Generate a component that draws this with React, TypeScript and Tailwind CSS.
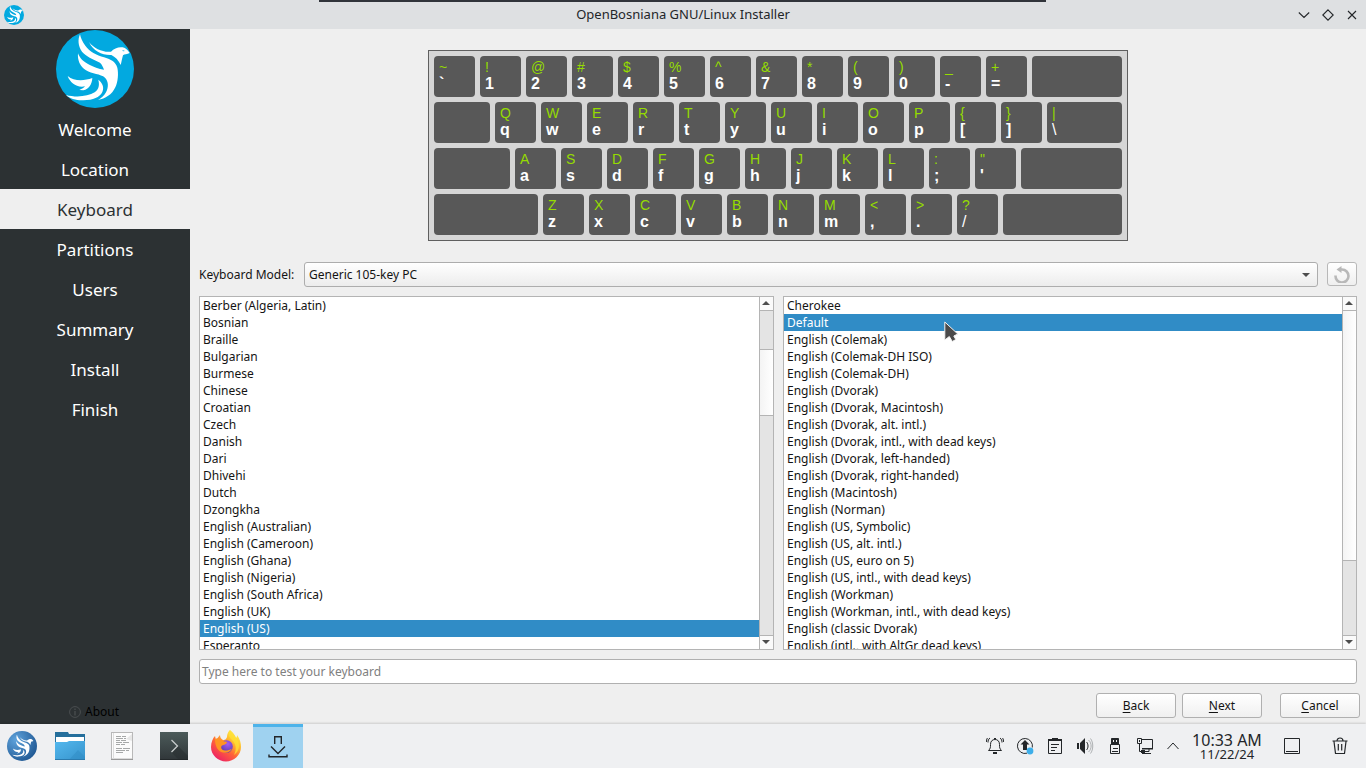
import React from "react";

const steps = ["Welcome", "Location", "Keyboard", "Partitions", "Users", "Summary", "Install", "Finish"];

const layouts = [
  "Berber (Algeria, Latin)", "Bosnian", "Braille", "Bulgarian", "Burmese", "Chinese", "Croatian", "Czech",
  "Danish", "Dari", "Dhivehi", "Dutch", "Dzongkha", "English (Australian)", "English (Cameroon)",
  "English (Ghana)", "English (Nigeria)", "English (South Africa)", "English (UK)", "English (US)", "Esperanto",
];

const variants = [
  "Cherokee", "Default", "English (Colemak)", "English (Colemak-DH ISO)", "English (Colemak-DH)",
  "English (Dvorak)", "English (Dvorak, Macintosh)", "English (Dvorak, alt. intl.)",
  "English (Dvorak, intl., with dead keys)", "English (Dvorak, left-handed)", "English (Dvorak, right-handed)",
  "English (Macintosh)", "English (Norman)", "English (US, Symbolic)", "English (US, alt. intl.)",
  "English (US, euro on 5)", "English (US, intl., with dead keys)", "English (Workman)",
  "English (Workman, intl., with dead keys)", "English (classic Dvorak)", "English (intl., with AltGr dead keys)",
];

const keyRows: { lead: string | null; keys: [string, string][]; last: [string, string] | null }[] = [
  {
    lead: null,
    keys: [["~", "`"], ["!", "1"], ["@", "2"], ["#", "3"], ["$", "4"], ["%", "5"], ["^", "6"], ["&", "7"], ["*", "8"], ["(", "9"], [")", "0"], ["_", "-"], ["+", "="]],
    last: null,
  },
  {
    lead: "w-[56px]",
    keys: [["Q", "q"], ["W", "w"], ["E", "e"], ["R", "r"], ["T", "t"], ["Y", "y"], ["U", "u"], ["I", "i"], ["O", "o"], ["P", "p"], ["{", "["], ["}", "]"]],
    last: ["|", "\\"],
  },
  {
    lead: "w-[76px]",
    keys: [["A", "a"], ["S", "s"], ["D", "d"], ["F", "f"], ["G", "g"], ["H", "h"], ["J", "j"], ["K", "k"], ["L", "l"], [":", ";"], ["\"", "'"]],
    last: null,
  },
  {
    lead: "w-[104px]",
    keys: [["Z", "z"], ["X", "x"], ["C", "c"], ["V", "v"], ["B", "b"], ["N", "n"], ["M", "m"], ["<", ","], [">", "."], ["?", "/"]],
    last: null,
  },
];

function Dove() {
  return (
    <g fill="#fff">
      <path d="M240 103C233 118 234 138 246 155C256 168 280 178 300 188C306 194 310 202 312 209C296 207 280 200 268 194C250 186 239 174 234 160C232 180 240 200 258 211C276 222 302 222 315 233C326 244 326 262 318 277C312 288 304 295 294 300C316 296 336 284 346 262C354 245 356 220 352 203C347 185 330 177 312 172C290 166 268 154 256 137C247 125 242 114 240 103Z" />
      <path d="M267 126C282 146 310 158 333 155C342 145 356 140 368 142C378 144 382 150 389 159C382 163 373 162 369 166C366 176 365 185 362 195C355 181 348 172 334 165C306 166 280 154 267 126Z" />
      <path d="M203 228C222 244 252 243 277 234C276 252 267 268 250 271L238 270C246 267 252 263 255 259C230 264 210 248 203 228Z" />
      <path d="M198 285C228 293 264 290 284 277C299 266 298 252 295 239C308 249 313 262 307 276C299 292 280 300 250 301C230 302 210 296 198 285Z" />
    </g>
  );
}

function Logo({ size }: { size: number }) {
  return (
    <svg width={size} height={size} viewBox="168 90 234 234">
      <circle cx="285" cy="207" r="117" fill="#02a9e0" />
      <Dove />
      <path d="M367 150l8 3-6 1z" fill="#02a9e0" />
    </svg>
  );
}

function Key({ label, className }: { label?: [string, string] | null; className: string }) {
  const thin = label && (label[1] === "\\" || label[1] === "/");
  return (
    <div className={"h-[41px] rounded-[4px] bg-[#585858] pl-[5px] pt-[3px] " + className}>
      {label && (
        <>
          <div className="h-[16px] text-[14px] leading-[17px] text-[#95dc00]">{label[0]}</div>
          <div className={"h-[17px] text-[16px] leading-[17px] text-white " + (thin ? "font-normal" : "font-bold")}>{label[1]}</div>
        </>
      )}
    </div>
  );
}

function Arrow({ up }: { up?: boolean }) {
  return (
    <svg width="8" height="4" viewBox="0 0 8 4">
      <path d={up ? "M0 4L4 0L8 4Z" : "M0 0L4 4L8 0Z"} fill="#4d4d4d" />
    </svg>
  );
}

function ListBox({ items, selected, thumb, before, className }: { items: string[]; selected: string; thumb: string; before: string; className: string }) {
  return (
    <div className={"flex h-[354px] border border-[#b4b4b4] bg-white " + className}>
      <div className="min-w-0 flex-1 overflow-hidden">
        {items.map((item) => (
          <div key={item} className={"h-[17px] whitespace-nowrap pl-[3px] leading-[17px] " + (item === selected ? "bg-[#308cc6] text-white" : "")}>
            {item}
          </div>
        ))}
      </div>
      <div className="flex w-[14px] flex-col border-l border-[#b4b4b4] bg-[#e4e4e4]">
        <div className="flex h-[14px] items-center justify-center border-b border-[#b4b4b4] bg-[#fafafa] pr-[2px] pb-px"><Arrow up /></div>
        <div className={before} />
        <div className={"border-b border-[#b4b4b4] bg-linear-to-r from-[#f4f4f4] to-white " + thumb} />
        <div className="flex-1" />
        <div className="flex h-[14px] items-center justify-center border-t border-[#b4b4b4] bg-[#fafafa] pr-[2px] pb-px"><Arrow /></div>
      </div>
    </div>
  );
}

function PushButton({ text, className }: { text: string; className: string }) {
  return (
    <button className={"flex h-[25px] w-[80px] items-center justify-center rounded-[3px] border border-[#b0b0b0] bg-linear-to-b from-white to-[#f0f0f0] " + className}>
      <span className="underline underline-offset-2">{text[0]}</span>{text.slice(1)}
    </button>
  );
}

function Launchers() {
  return (
    <div className="flex">
      <div className="flex w-[44px] items-center justify-center">
        <svg width="30" height="30" viewBox="168 90 234 234">
          <defs><radialGradient id="menu" cx=".3" cy=".3" r=".8"><stop offset="0" stopColor="#5fa3dc" /><stop offset="1" stopColor="#1f5792" /></radialGradient></defs>
          <circle cx="285" cy="207" r="117" fill="url(#menu)" />
          <g transform="translate(39 31) scale(.86)"><Dove /></g>
        </svg>
      </div>
      <div className="flex w-[52px] items-center justify-center">
        <svg width="30" height="28" viewBox="0 0 30 28">
          <defs><linearGradient id="folder" x1="0" y1="0" x2="1" y2="1"><stop offset="0" stopColor="#54b8ee" /><stop offset="1" stopColor="#3794cd" /></linearGradient></defs>
          <path d="M0 0h13l1 2h16v13H0z" fill="#256f9c" />
          <path d="M1 5h28v6H1z" fill="#fff" />
          <path d="M0 10h12l2-1h16v18H0z" fill="url(#folder)" />
          <path d="M14 28L23 18l7 7v3z" fill="#308bc4" opacity=".5" />
          <path d="M0 27h30v1H0z" fill="#2a7aae" />
        </svg>
      </div>
      <div className="flex w-[52px] items-center justify-center">
        <svg width="22" height="28" viewBox="0 0 22 28">
          <rect x=".5" y=".5" width="21" height="26.5" fill="#fbfbfb" stroke="#b8b8b8" />
          <path d="M2.500 1v26" stroke="#ddd" />
          <path d="M0 27.500h22" stroke="#999" />
          <path d="M21 2v7l-6-2z" fill="#e7e7e7" />
          <path d="M5 4.500h5m1 0h4M5 6.500h7m1 0h2M5 8.500h4m1 0h5M5 10.500h6m1 0h6M5 12.500h4m1 0h4M5 16.500h6m1 0h7M5 18.500h9m1 0h3M5 20.500h7" stroke="#a6a8a8" />
        </svg>
      </div>
      <div className="flex w-[52px] items-center justify-center">
        <svg width="28" height="28" viewBox="0 0 28 28">
          <defs><linearGradient id="term" x1="0" y1="0" x2="0" y2="1"><stop offset="0" stopColor="#4c5b5a" /><stop offset="1" stopColor="#303639" /></linearGradient></defs>
          <path d="M0 0h28v28H0z" fill="url(#term)" />
          <path d="M12 21l6-7 10 10v4H19z" fill="#262b2d" opacity=".5" />
          <path d="M11.500 8l6 6-6 6" fill="none" stroke="#c7cbcb" strokeWidth="1.300" />
          <path d="M0 27.500h28" stroke="#23282a" />
        </svg>
      </div>
      <div className="flex w-[53px] items-center justify-center pr-[2px]">
        <svg width="32" height="32" viewBox="0 0 32 32">
          <defs>
            <linearGradient id="fox" x1=".85" y1=".05" x2=".2" y2=".95"><stop offset="0" stopColor="#fff44f" /><stop offset=".3" stopColor="#ffbd2f" /><stop offset=".6" stopColor="#ff6338" /><stop offset="1" stopColor="#ed1f67" /></linearGradient>
            <radialGradient id="globe" cx=".6" cy=".3" r=".8"><stop offset="0" stopColor="#a55cf0" /><stop offset="1" stopColor="#5038a8" /></radialGradient>
          </defs>
          <path d="M20 0c3 2 5 5 6 8 1-1 1-2 1-3 3 4 4 8 4 12 0 8-7 14.500-15 14.500S1 25 1 17c0-5 2-9 4-11l1 4 4-5c0 2 1 4 3 5 3 0 3-1 4-3 0-3 1-5 3-7z" fill="url(#fox)" />
          <path d="M20 0c-3 4-1 7 2 10 4 4 5 9 2 15 6-4 6-11 3-16-2-4-6-5-7-9z" fill="#ffe234" opacity=".75" />
          <circle cx="16.500" cy="16.500" r="6.300" fill="url(#globe)" />
          <path d="M5 9c3-1 6 0 8 2 2 1 4 0 4 1.500-1 2-3 2-5 3-2 2 0 5 3 5 3 0 5-.5 7-2-2 4-6 5-9 4-5-1-8-6-8-13.500z" fill="#ff9422" />
        </svg>
      </div>
      <div className="flex w-[50px] items-center justify-center border-t-[3px] border-[#4db3ea] bg-[#9fd2f0] pb-[3px]">
        <svg width="20" height="23" viewBox="0 0 20 23" fill="none" stroke="#232629" strokeWidth="1.400">
          <path d="M6.700 9V1.700h6.600V9M3 11.500l7 7 7-7M1 19.500v2.300h18v-2.300" />
        </svg>
      </div>
    </div>
  );
}

function Tray() {
  return (
    <div className="ml-auto flex items-center text-[#232629]">
      <div className="flex w-[30px] justify-center">
        <svg width="18" height="18" viewBox="0 0 18 18" fill="none" stroke="currentColor">
          <path d="M2.500 13.500c2-2 2-3 2-6C4.500 4 6.500 2.500 9 2.500s4.500 1.500 4.500 5c0 3 0 4 2 6zM4 1C2.500 2 2 3.500 2 5.500M1.500 1C.5 2 .5 4 .5 5M14 1c1.500 1 2 2.500 2 4.500M16.500 1c1 1 1 3 1 4" />
          <path d="M7 15h4v2H7zM8 1h2v1H8z" fill="currentColor" stroke="none" />
        </svg>
      </div>
      <div className="flex w-[30px] justify-center">
        <svg width="18" height="18" viewBox="0 0 18 18" fill="none" stroke="currentColor">
          <path d="M11 16.200A7.500 7.500 0 1 1 16.300 10.500" />
          <path d="M9 3l4.500 4.500H11V13H7V7.500H4.500z" fill="currentColor" stroke="none" />
          <circle cx="14" cy="14" r="3.400" fill="#3daee9" stroke="none" />
        </svg>
      </div>
      <div className="flex w-[30px] justify-center">
        <svg width="16" height="18" viewBox="0 0 16 18" fill="none" stroke="currentColor">
          <path d="M1.500 2.500h13v14h-13z" /><path d="M1 2h14v2H1zM5 1h6v3H5z" fill="currentColor" stroke="none" />
          <path d="M4 7.500h8M4 10.500h6M4 13.500h4" />
        </svg>
      </div>
      <div className="flex w-[30px] justify-center">
        <svg width="18" height="18" viewBox="0 0 18 18" fill="none">
          <path d="M1 6h2v6H1zM4 6l5-5v16l-5-5z" fill="currentColor" />
          <path d="M10.500 5c2 2 2 6 0 8" stroke="currentColor" /><path d="M12.500 3c3.500 3 3.500 9 0 12M14.500 1.500c3 4 3 11 0 15" stroke="#aeb1b3" />
        </svg>
      </div>
      <div className="flex w-[30px] justify-center">
        <svg width="12" height="18" viewBox="0 0 12 18" fill="none" stroke="currentColor">
          <path d="M2.500 1.500h7v6h-7z" fill="currentColor" /><path d="M1.500 7.500h9v9h-9zM4 11.500h5M3 14.500h6" />
          <path d="M4 3h1v2H4zM7 3h1v2H7z" fill="#eff0f1" stroke="none" />
        </svg>
      </div>
      <div className="flex w-[30px] justify-center">
        <svg width="18" height="18" viewBox="0 0 18 18" fill="none" stroke="currentColor">
          <path d="M6 2.500h10.500v9H6M1.500 1.500h4v5h-4zM3.500 7v7.500H7M8 14.500h5v-3M6 16.500h9" />
          <path d="M6 11h11v1.500H6zM3 3h1v2H3zM5 13h4v3H5z" fill="currentColor" stroke="none" />
        </svg>
      </div>
      <div className="flex w-[26px] justify-center">
        <svg width="12" height="8" viewBox="0 0 12 8" fill="none" stroke="currentColor"><path d="M.5 7L6 1l5.500 6" /></svg>
      </div>
      <div className="ml-[6px] w-[70px] whitespace-nowrap text-center">
        <div className="text-[16px] leading-[16px]">10:33 AM</div>
        <div className="text-[13px] leading-[13px]">11/22/24</div>
      </div>
      <div className="ml-[14px] flex w-[32px] justify-center">
        <svg width="16" height="16" viewBox="0 0 16 16" fill="none" stroke="currentColor"><path d="M.5.5h15v15H.5zM2 13.500h12" /></svg>
      </div>
      <div className="ml-[16px] mr-[10px] flex w-[32px] justify-center">
        <svg width="16" height="18" viewBox="0 0 16 18" fill="none" stroke="currentColor" strokeWidth="1.200">
          <path d="M.5 4h15M5 4c0-4 6-4 6 0M2 4.500l1.500 12h9l1.500-12M6.300 7v6.500M9.700 7v6.500" />
        </svg>
      </div>
    </div>
  );
}

export default function App() {
  return (
    <div className="relative flex h-[768px] w-[1366px] flex-col overflow-hidden bg-[#efefef] font-['Noto_Sans',sans-serif] text-[12px] text-[#141414]">
      <header className="flex h-[29px] shrink-0 items-center bg-[#dee0e2] pl-[4px]">
        <Logo size={20} />
        <h1 className="flex-1 pl-[44px] text-center text-[13px] text-[#232629]">OpenBosniana GNU/Linux Installer</h1>
        <svg width="68" height="16" viewBox="0 0 68 16" fill="none" stroke="#232629" strokeWidth="1.100">
          <path d="M.8 5.500L6 10.500l5.200-5M30 2.800L35.200 8 30 13.200 24.800 8zM50 4l8 8M58 4l-8 8" />
        </svg>
      </header>
      <div className="absolute left-[319px] top-0 h-[2px] w-[727px] bg-[#30343a]" />

      <div className="flex h-[695px] shrink-0">
        <nav className="flex w-[190px] flex-col items-center bg-[#2c3133] text-white">
          <div className="flex h-[80px] w-full justify-center pt-px"><Logo size={78} /></div>
          {steps.map((s) => (
            <div key={s} className={"flex h-[40px] w-full items-center justify-center pt-[2px] text-[17px] " + (s === "Keyboard" ? "bg-[#efefef] text-[#2c3133]" : "")}>{s}</div>
          ))}
          <div className="mt-auto mb-[4px] flex h-[17px] items-center gap-[4px] pr-[2px] text-black">
            <svg width="12" height="12" viewBox="0 0 12 12" fill="none" stroke="#4a4e50"><circle cx="6" cy="6" r="5.400" /><path d="M6 2.500v1.500M6 5v4.500" strokeWidth="1.300" /></svg>
            <span>About</span>
          </div>
        </nav>

        <main className="flex flex-1 flex-col pl-[9px] pr-[9px]">
          <div className="ml-[229px] mt-[21px] flex h-[191px] w-[700px] flex-col gap-[5px] border border-[#5f5f5f] bg-[#d6d6d6] p-[5px] font-['Liberation_Sans',sans-serif]">
            {keyRows.map((row, i) => (
              <div key={i} className="flex gap-[5px]">
                {row.lead && <Key className={row.lead} />}
                {row.keys.map((k) => <Key key={k[1]} label={k} className="w-[41px]" />)}
                <Key label={row.last} className="flex-1" />
              </div>
            ))}
          </div>

          <div className="mt-[21px] flex h-[25px] items-center">
            <label className="w-[105px]">Keyboard Model:</label>
            <div className="flex h-[25px] w-[1014px] items-center justify-between rounded-[3px] border border-[#adadad] bg-linear-to-b from-white to-[#ececec] pl-[4px] pr-[7px]">
              <span>Generic 105-key PC</span>
              <Arrow />
            </div>
            <button className="ml-[9px] flex h-[24px] w-[30px] items-center justify-center self-start rounded-[3px] border border-[#b8b8b8] bg-linear-to-b from-white to-[#efefef]">
              <svg width="16" height="17" viewBox="0 0 16 17" fill="none">
                <path d="M1.500 9.500A6.500 6.500 0 1 0 8 3.500H6" stroke="#b8b8b8" strokeWidth="2.600" />
                <path d="M7.500 0v7L2.500 3.500z" fill="#b8b8b8" />
              </svg>
            </button>
          </div>

          <div className="mt-[9px] flex gap-[9px]">
            <ListBox items={layouts} selected="English (US)" className="w-[575px]" before="h-[39px] border-b border-[#b4b4b4]" thumb="h-[66px]" />
            <ListBox items={variants} selected="Default" className="w-[574px]" before="" thumb="h-[250px]" />
          </div>

          <div className="mt-[9px] flex h-[25px] items-center rounded-[3px] border border-[#b0b0b0] bg-white pl-[2px] text-[#808080]">Type here to test your keyboard</div>

          <div className="-mr-[3px] mt-[9px] flex justify-end">
            <PushButton text="Back" className="mr-[6px]" />
            <PushButton text="Next" className="mr-[18px]" />
            <PushButton text="Cancel" className="" />
          </div>
        </main>
      </div>

      <footer className="flex h-[44px] shrink-0 bg-[#eff0f2] shadow-[0_-1px_2px_#00000026]">
        <Launchers />
        <Tray />
      </footer>

      <svg className="absolute left-[943px] top-[320px]" width="16" height="24" viewBox="0 0 16 24">
        <path d="M1.800 2v18l4.500-3.500 3 5 3.500-2-2-3.500 4-2z" fill="#4a4a4a" stroke="#f4f4f4" strokeWidth="1" />
      </svg>
    </div>
  );
}
